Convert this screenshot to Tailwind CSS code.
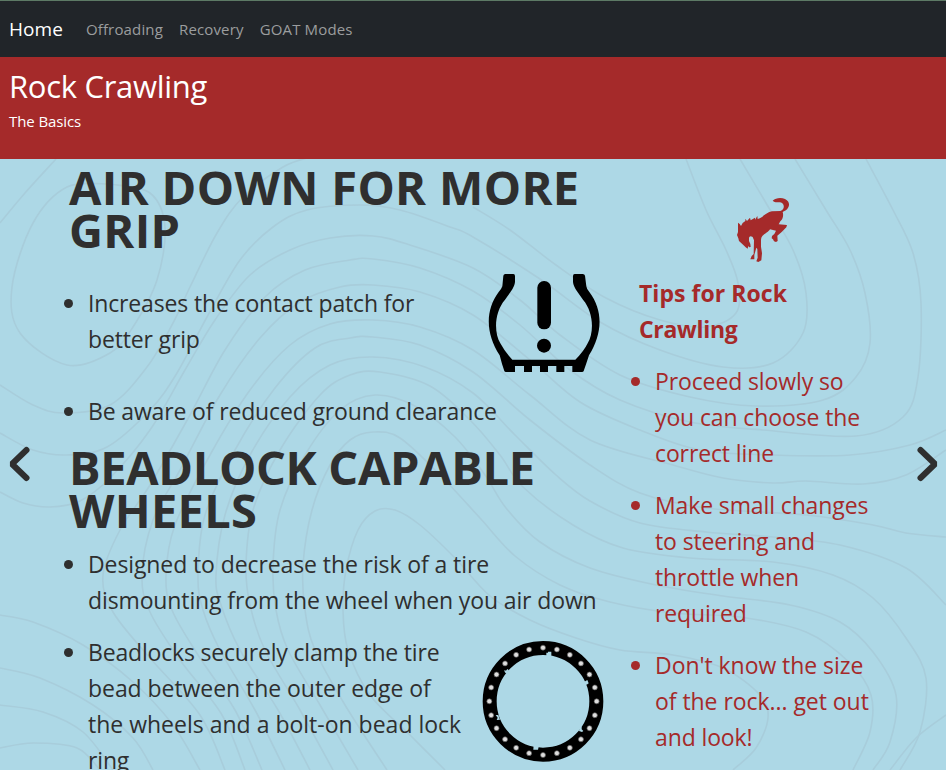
<!DOCTYPE html>
<html lang="en">
<head>
<meta charset="utf-8">
<title>Rock Crawling</title>
<script src="https://cdn.jsdelivr.net/npm/@tailwindcss/browser@4"></script>
</head>
<body class="h-[770px] overflow-hidden bg-[#add8e6] font-['Open_Sans',sans-serif] text-[#2f2f2f]">
<nav class="flex h-[57px] items-center border-t border-[#5d7a65] bg-[#212529] pl-[9px] text-[15px] tracking-[0.15px] text-[#9b9d9e]">
  <a class="mr-[23px] text-[19px] tracking-[0.05px] text-white">Home</a>
  <a class="mr-4">Offroading</a>
  <a class="mr-4">Recovery</a>
  <a>GOAT Modes</a>
</nav>
<header class="h-[102px] bg-[#a52a2a] pt-[10px] pl-[9px] text-white">
  <h1 class="text-[31px] leading-[38px] tracking-[-0.3px]">Rock Crawling</h1>
  <p class="pt-1 text-[15px] leading-6 tracking-[-0.1px]">The Basics</p>
</header>
<main class="relative flex h-[611px] overflow-hidden">
  <svg class="absolute inset-0" width="946" height="611" viewBox="0 159 946 611" fill="none" stroke="#a8cddb" stroke-width="1.6" id="contours"></svg>
  <button class="relative flex w-[69px] items-center pb-0.5 pl-[7px]" aria-label="Previous">
    <svg width="24" height="38" viewBox="0 0 24 38" fill="none" stroke="#2f2f2f" stroke-width="6" stroke-linecap="round" stroke-linejoin="bevel"><path d="M19.5 5L5 19L19.5 33"/></svg>
  </button>
  <section class="relative w-[571px] shrink-0 pt-[7px] text-[23px] leading-9 tracking-[-0.15px] whitespace-nowrap">
    <h2 class="text-[47px] leading-[43px] font-bold tracking-[0.33px]">AIR DOWN FOR MORE<br>GRIP</h2>
    <div class="flex pt-[33px]">
      <ul class="w-[412px] list-none">
        <li class="relative pl-[19px] before:absolute before:top-[14px] before:-left-[5px] before:size-[9px] before:rounded-full before:bg-[#2f2f2f]">Increases the contact patch for<br>better grip</li>
        <li class="relative mt-9 pl-[19px] before:absolute before:top-[14px] before:-left-[5px] before:size-[9px] before:rounded-full before:bg-[#2f2f2f]">Be aware of reduced ground clearance</li>
      </ul>
      <svg class="-mt-[25px] -ml-1.5 shrink-0" width="140" height="125" viewBox="0 0 420 375">
        <path d="M85 47Q86 42 91 42H115Q120 42 120 48V66Q119 78 108 94L90 119C57 158 57 218 76 250Q89 275 112 299H301Q326 275 338 250C357 218 357 158 324 119L306 94Q295 78 294 66V48Q294 42 299 42H323Q329 42 330 47L334 79Q335 87 343 96C386 153 382 222 342 286Q333 314 326 333Q325 336 321 336H292V318H268V336H244V318H219V336H195V318H171V336H147V318H120V336H93Q89 336 88 333Q81 314 74 286C33 222 29 153 71 96Q80 86 82 79Z"/>
        <rect x="187" y="63" width="41" height="145" rx="20"/><circle cx="207" cy="257" r="21"/>
      </svg>
    </div>
    <h2 class="mt-[17px] text-[47px] leading-[43px] font-bold tracking-[-0.35px]">BEADLOCK CAPABLE<br><span class="tracking-[0.3px]">WHEELS</span></h2>
    <ul class="pt-[14px]">
      <li class="relative pl-[19px] before:absolute before:top-[14px] before:-left-[5px] before:size-[9px] before:rounded-full before:bg-[#2f2f2f]"><span class="tracking-[-0.1px]">Designed to decrease the risk of a tire</span><br><span class="tracking-[-0.12px]">dismounting from the wheel when you air down</span></li>
      <li class="relative mt-4 flex pl-[19px] before:absolute before:top-[14px] before:-left-[5px] before:size-[9px] before:rounded-full before:bg-[#2f2f2f]">
        <p class="w-[392px]"><span class="tracking-[-0.18px]">Beadlocks securely clamp the tire</span><br><span class="tracking-[-0.05px]">bead between the outer edge of</span><br><span class="tracking-[0px]">the wheels and a bolt-on bead lock</span><br>ring</p>
        <svg class="-mt-1 -ml-[10px] shrink-0" width="145" height="140" viewBox="0 0 435 420">
          <circle cx="219" cy="214" r="160" fill="none" stroke="#000" stroke-width="42"/>
          <g fill="#add8e6"><path d="M229 78V68H234V65H244V78Z"/><path d="M344 162L343 155L352 150L356 160L350 164Z"/><path d="M330 292L335 291V298L340 303L336 306L327 303Z"/><path d="M191 346L190 359H204L206 350Z"/><path d="M77 255L85 255L90 269L80 270L83 263Z"/><path d="M104 126L103 120L108 122L112 117L117 121L109 131Z"/></g>
          <g id="bolts" fill="#ddd" stroke="#555" stroke-width="2"></g>
        </svg>
      </li>
    </ul>
  </section>
  <aside class="relative -ml-px flex w-[246px] shrink-0 flex-col text-[23px] leading-9 tracking-[-0.12px] whitespace-nowrap text-[#a52a2a]">
    <svg class="mt-[26px] ml-[81px] shrink-0" width="90" height="90" viewBox="0 0 270 270" fill="#a52a2a">
      <path d="M158 47C167 38 184 37 195 42C208 48 209 59 205 67C201 76 192 79 188 81C191 91 189 102 181 109L176 118L201 120L199 127L185 141L172 152L173 168L168 171L162 169L159 163L155 160L156 153L163 147L168 137L150 133C148 139 133 147 127 153Q123 157 123 165V185L126 205L124 226L115 231L109 229L113 218L112 192L109 188L103 210V223H91L95 213L101 207L102 166L98 156Q89 150 87 158V168L91 177L92 186L87 187L85 182L83 191L77 187L70 180L57 168L55 160L51 150L54 141L54 113L59 117L63 123L68 114L76 108V101L81 108L90 98L92 106L105 98V104L112 93L113 102C126 99 139 82 156 79L181 78C195 73 195 54 180 52C170 51 165 54 158 47Z"/>
    </svg>
    <h3 class="font-bold tracking-[-0.3px]"><span class="tracking-[0.05px]">Tips for Rock</span><br>Crawling</h3>
    <ul class="pt-4">
      <li class="relative pl-4 before:absolute before:top-[14px] before:-left-[8px] before:size-[9px] before:rounded-full before:bg-[#a52a2a]">Proceed slowly so<br>you can choose the<br>correct line</li>
      <li class="relative mt-4 pl-4 before:absolute before:top-[14px] before:-left-[8px] before:size-[9px] before:rounded-full before:bg-[#a52a2a]">Make small changes<br>to steering and<br>throttle when<br>required</li>
      <li class="relative mt-4 pl-4 before:absolute before:top-[14px] before:-left-[8px] before:size-[9px] before:rounded-full before:bg-[#a52a2a]"><span class="tracking-[-0.05px]">Don't know the size</span><br><span class="tracking-[-0.05px]">of the rock... get out</span><br>and look!</li>
    </ul>
  </aside>
  <button class="relative flex flex-1 items-center justify-end pr-1.5 pb-0.5" aria-label="Next">
    <svg width="24" height="38" viewBox="0 0 24 38" fill="none" stroke="#2f2f2f" stroke-width="6" stroke-linecap="round" stroke-linejoin="bevel"><path d="M4.5 5L19 19L4.5 33"/></svg>
  </button>
</main>
<script>
const NS = 'http://www.w3.org/2000/svg';
const add = (parent, tag, attrs) => {
  const el = document.createElementNS(NS, tag);
  for (const k in attrs) el.setAttribute(k, attrs[k]);
  parent.appendChild(el);
};
// Elevation lines of the topographic background, as x,y point lists.
const lines = [
  "56,159 25,193 0,223",
  "110,184 67,187 33,223 12,287 20,333 67,365 110,353 133,327 157,280 165,227 150,193 110,184",
  "0,385 33,405 63,413 110,405 147,367 173,323 190,287 217,233 243,197 283,167 310,157",
  "0,433 33,450 67,455 107,447 150,410 177,373 207,317 240,260 273,227 307,210 360,205 400,210 450,227 473,237 540,279 600,322 660,350 723,367 773,363 803,333 806,293 793,250 766,203 740,159",
  "0,492 23,503 50,507 80,501 110,478 150,430 185,370 215,320 250,275 290,250 330,238 373,236 410,245 473,268 520,300 560,335 620,375 690,397 756,406 823,400 856,377 870,343 865,293 850,250 826,210 795,159",
  "225,770 200,715 150,658 113,612 103,575 120,530 150,485 190,415 225,350 265,297 305,270 350,260 373,259 420,268 473,291 520,325 570,370 620,400 690,422 763,430 856,436 903,417 918,377 921,303 913,253 893,210 866,159",
  "245,770 222,715 180,660 150,612 142,575 153,520 180,470 220,395 260,338 300,302 340,287 373,285 420,292 473,315 530,360 580,402 640,430 700,450 773,455 850,455 910,445 946,430",
  "262,770 235,710 198,655 172,610 166,575 175,525 210,455 250,390 290,345 330,324 373,320 420,327 473,350 530,395 590,440 673,465 723,478 773,483 806,481 863,484 906,475 946,450",
  "285,770 255,710 220,650 203,610 198,575 205,515 235,450 275,388 315,348 350,338 373,337 420,345 473,372 530,420 590,465 640,493 706,508 806,515 873,525 906,533 946,537",
  "310,770 278,710 240,650 221,605 216,575 225,515 250,455 290,397 330,365 373,357 425,367 473,393 515,435 556,475 590,501 640,523 706,532 773,537 840,545 906,568 946,605",
  "333,770 300,710 265,650 250,605 246,565 253,510 280,450 320,395 350,375 380,372 430,386 470,420 500,455 523,487 573,525 623,548 690,558 773,562 833,575 873,598 906,638 926,678 920,732 900,770",
  "358,770 320,705 288,650 276,610 273,565 280,510 305,455 340,410 375,395 415,406 455,437 485,475 506,508 540,542 590,568 656,585 723,596 790,605 840,622 873,652 896,695 890,742 873,770",
  "387,770 345,705 315,650 305,610 303,565 312,510 330,465 350,440 373,432 400,438 440,475 480,518 515,556 560,585 610,602 673,613 740,617 806,632 850,663 871,695 870,732 853,770",
  "445,770 410,735 370,695 348,650 343,610 346,570 358,530 375,511 395,510 420,525 455,558 490,596 530,620 576,638 620,650 673,655 723,668 760,695 768,718 756,748 733,770",
  "473,207 510,230 556,265 606,298 660,320 706,327 736,313 738,283 726,250 706,210 686,159",
  "0,615 33,622 83,645 133,682 173,725 200,770",
  "0,668 40,678 93,705 133,738 153,770",
  "0,705 43,712 83,732 113,770",
  "0,748 33,743 77,748 100,770",
  "890,770 916,738 946,715"
];
const host = document.getElementById('contours');
for (const line of lines) {
  const p = line.split(' ').map(s => s.split(',').map(Number));
  let d = `M${p[0]}`;
  for (let i = 0; i < p.length - 1; i++) {
    const a = p[i - 1] || p[i], b = p[i], c = p[i + 1], e = p[i + 2] || c;
    d += `C${b[0] + (c[0] - a[0]) / 6} ${b[1] + (c[1] - a[1]) / 6} ${c[0] - (e[0] - b[0]) / 6} ${c[1] - (e[1] - b[1]) / 6} ${c}`;
  }
  add(host, 'path', { d });
}
const bolts = document.getElementById('bolts');
for (let i = 0; i < 24; i++) {
  const t = i * Math.PI / 12;
  add(bolts, 'circle', { cx: 219 + 161 * Math.cos(t), cy: 214 + 161 * Math.sin(t), r: 7.5 });
}
</script>
</body>
</html>
